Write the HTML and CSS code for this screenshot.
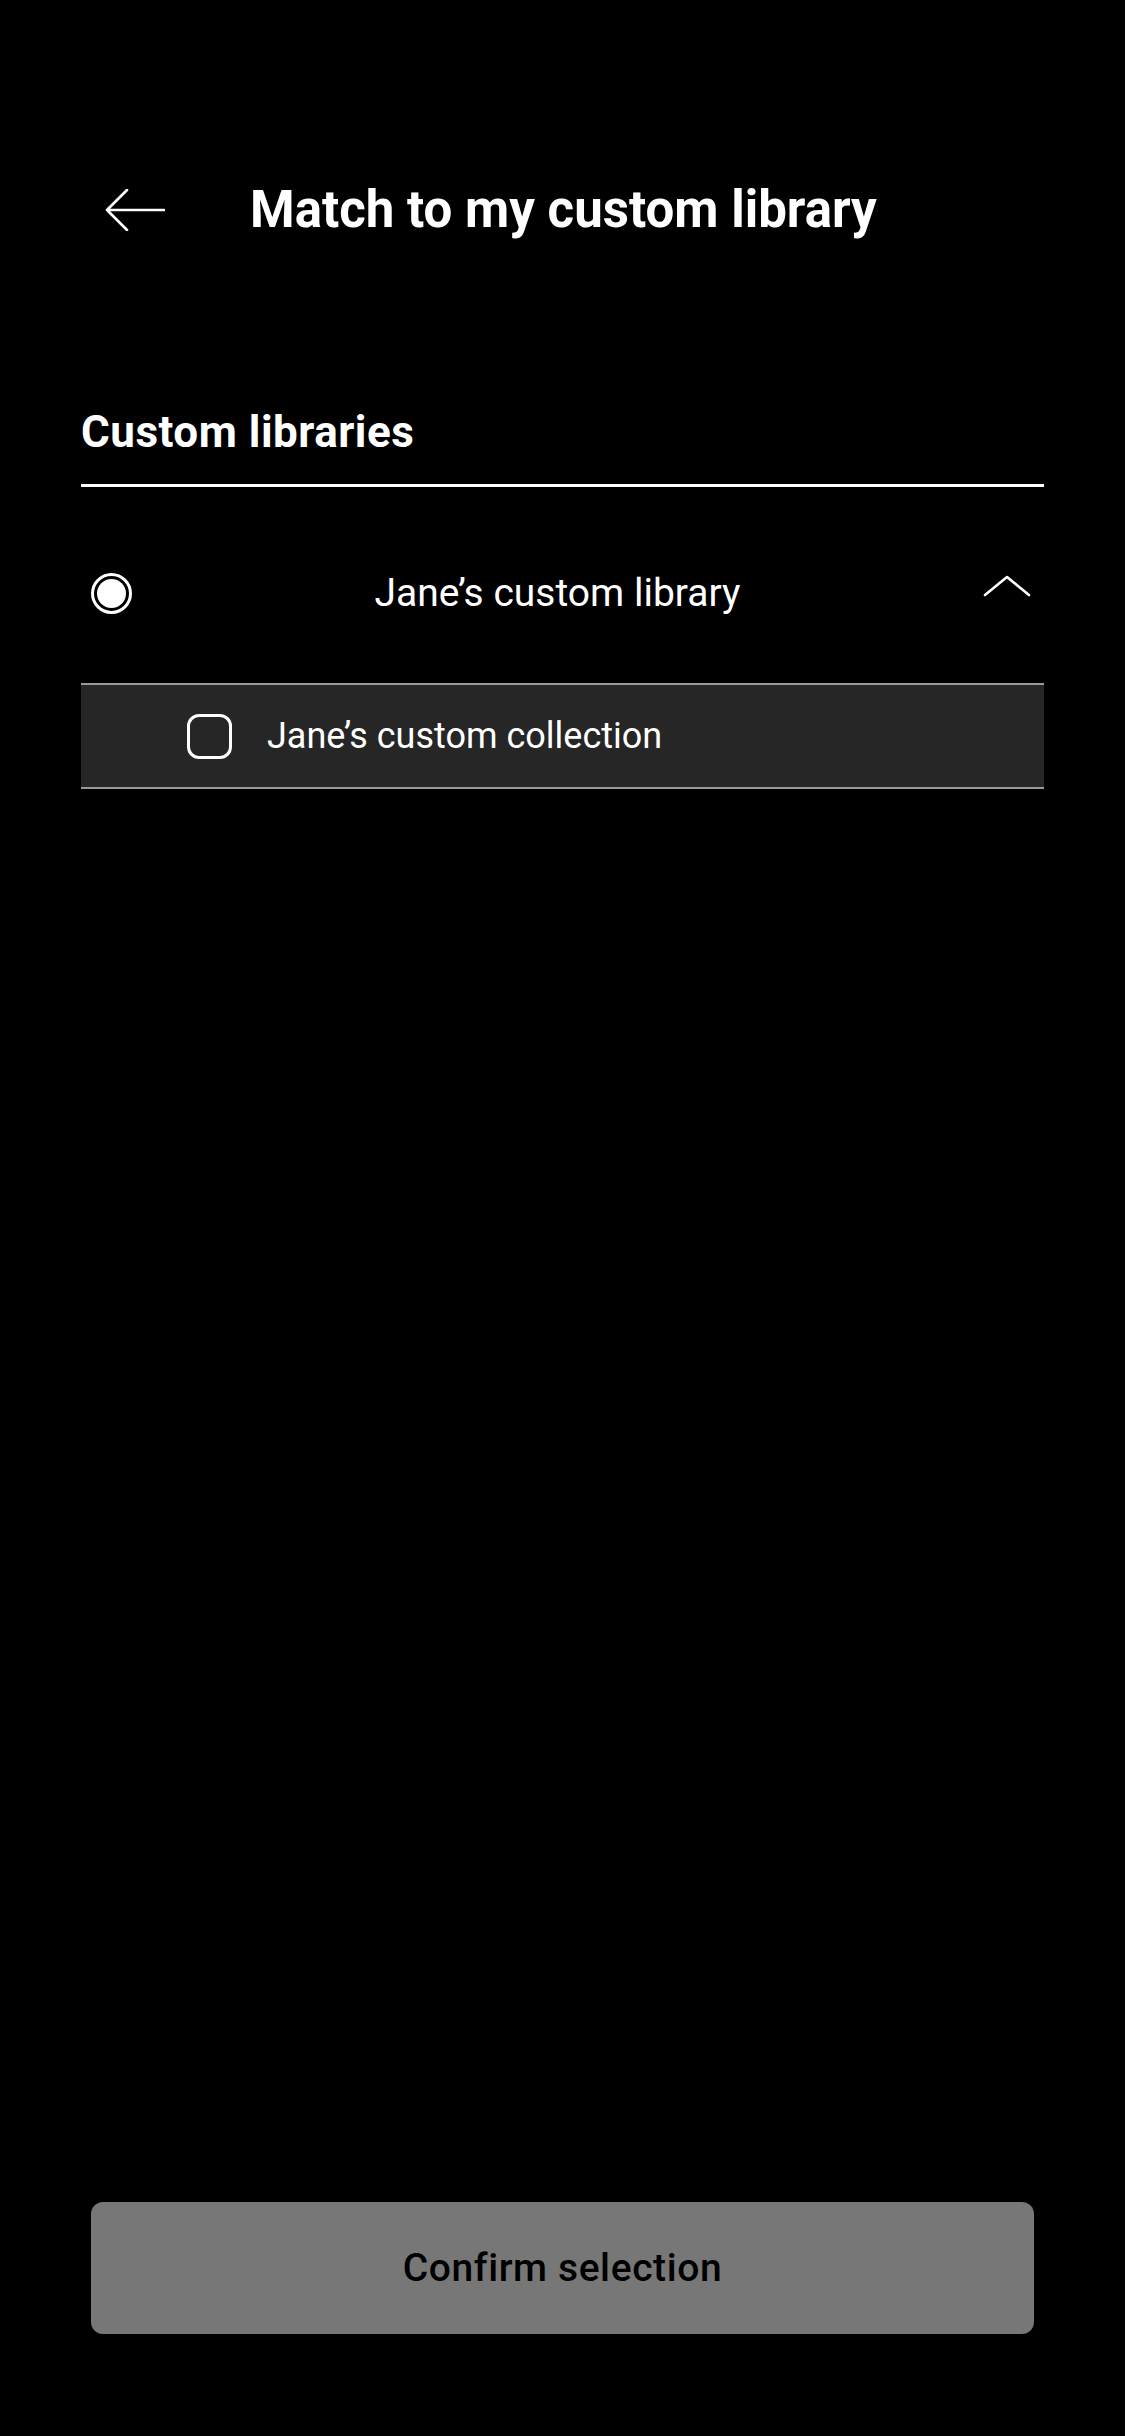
FILE: index.html
```html
<!DOCTYPE html>
<html lang="en">
<head>
<meta charset="utf-8">
<title>Match to my custom library</title>
<link rel="stylesheet" href="styles.css">
</head>
<body>
<div class="screen">
  <header class="topbar">
    <svg class="back" width="60" height="42" viewBox="0 0 60 42" fill="none" stroke="#fff" stroke-width="2.6" stroke-linecap="round" stroke-linejoin="round">
      <path d="M59 21H2M22 1L2 21l20 20"/>
    </svg>
    <h1 class="title">Match to my custom library</h1>
  </header>

  <section class="section">
    <h2 class="section-title">Custom libraries</h2>

    <div class="lib-row">
      <span class="radio"><span class="radio-dot"></span></span>
      <span class="lib-name">Jane’s custom library</span>
      <svg class="chevron" width="48" height="22" viewBox="0 0 48 22" fill="none" stroke="#fff" stroke-width="2.6" stroke-linecap="round" stroke-linejoin="round">
        <path d="M2 20L24 2l22 18"/>
      </svg>
    </div>

    <div class="collection-row">
      <span class="checkbox"></span>
      <span class="collection-name">Jane’s custom collection</span>
    </div>
  </section>

  <button class="confirm" type="button">Confirm selection</button>
</div>
</body>
</html>
```

FILE: styles.css
```css
* {
  box-sizing: border-box;
}

html, body {
  margin: 0;
  padding: 0;
  background: #000;
}

body {
  font-family: Roboto, "Noto Sans", "Liberation Sans", sans-serif;
  color: #fff;
}

.screen {
  width: 1125px;
  height: 2436px;
  display: flex;
  flex-direction: column;
  padding-top: 180px;
  padding-bottom: 102px;
}

.topbar {
  display: flex;
  align-items: center;
  height: 60px;
  padding-left: 105px;
  gap: 85px;
}

.back {
  flex: none;
  display: block;
}

.title {
  margin: 0;
  font-size: 51px;
  line-height: 60px;
  font-weight: 700;
  letter-spacing: 0;
}

.section {
  margin: 166px 81px 0;
}

.section-title {
  margin: 0;
  font-size: 44px;
  line-height: 52px;
  font-weight: 700;
  letter-spacing: 0.5px;
  padding-bottom: 26px;
  border-bottom: 3px solid #fff;
}

.lib-row {
  display: flex;
  align-items: flex-start;
  padding: 86px 13px 69px 10px;
}

.radio {
  flex: none;
  width: 41px;
  height: 41px;
  border: 3px solid #fff;
  border-radius: 50%;
  display: flex;
  align-items: center;
  justify-content: center;
}

.radio-dot {
  width: 29px;
  height: 29px;
  border-radius: 50%;
  background: #fff;
}

.lib-name {
  flex: 1;
  text-align: center;
  font-size: 39px;
  line-height: 41px;
  font-weight: 400;
}

.chevron {
  flex: none;
  display: block;
  margin-top: 2px;
}

.collection-row {
  display: flex;
  align-items: center;
  gap: 35px;
  background: #262626;
  border-top: 2px solid #9a9a9a;
  border-bottom: 2px solid #9a9a9a;
  padding: 29px 0 28px 106px;
}

.checkbox {
  flex: none;
  width: 45px;
  height: 45px;
  border: 3px solid #fff;
  border-radius: 12px;
}

.collection-name {
  font-size: 36px;
  line-height: 45px;
  font-weight: 400;
}

.confirm {
  margin: auto 91px 0;
  height: 132px;
  border: 0;
  border-radius: 12px;
  background: #777;
  color: #000;
  font-family: Roboto, "Noto Sans", "Liberation Sans", sans-serif;
  font-size: 39px;
  font-weight: 500;
  letter-spacing: 0.6px;
}
```
